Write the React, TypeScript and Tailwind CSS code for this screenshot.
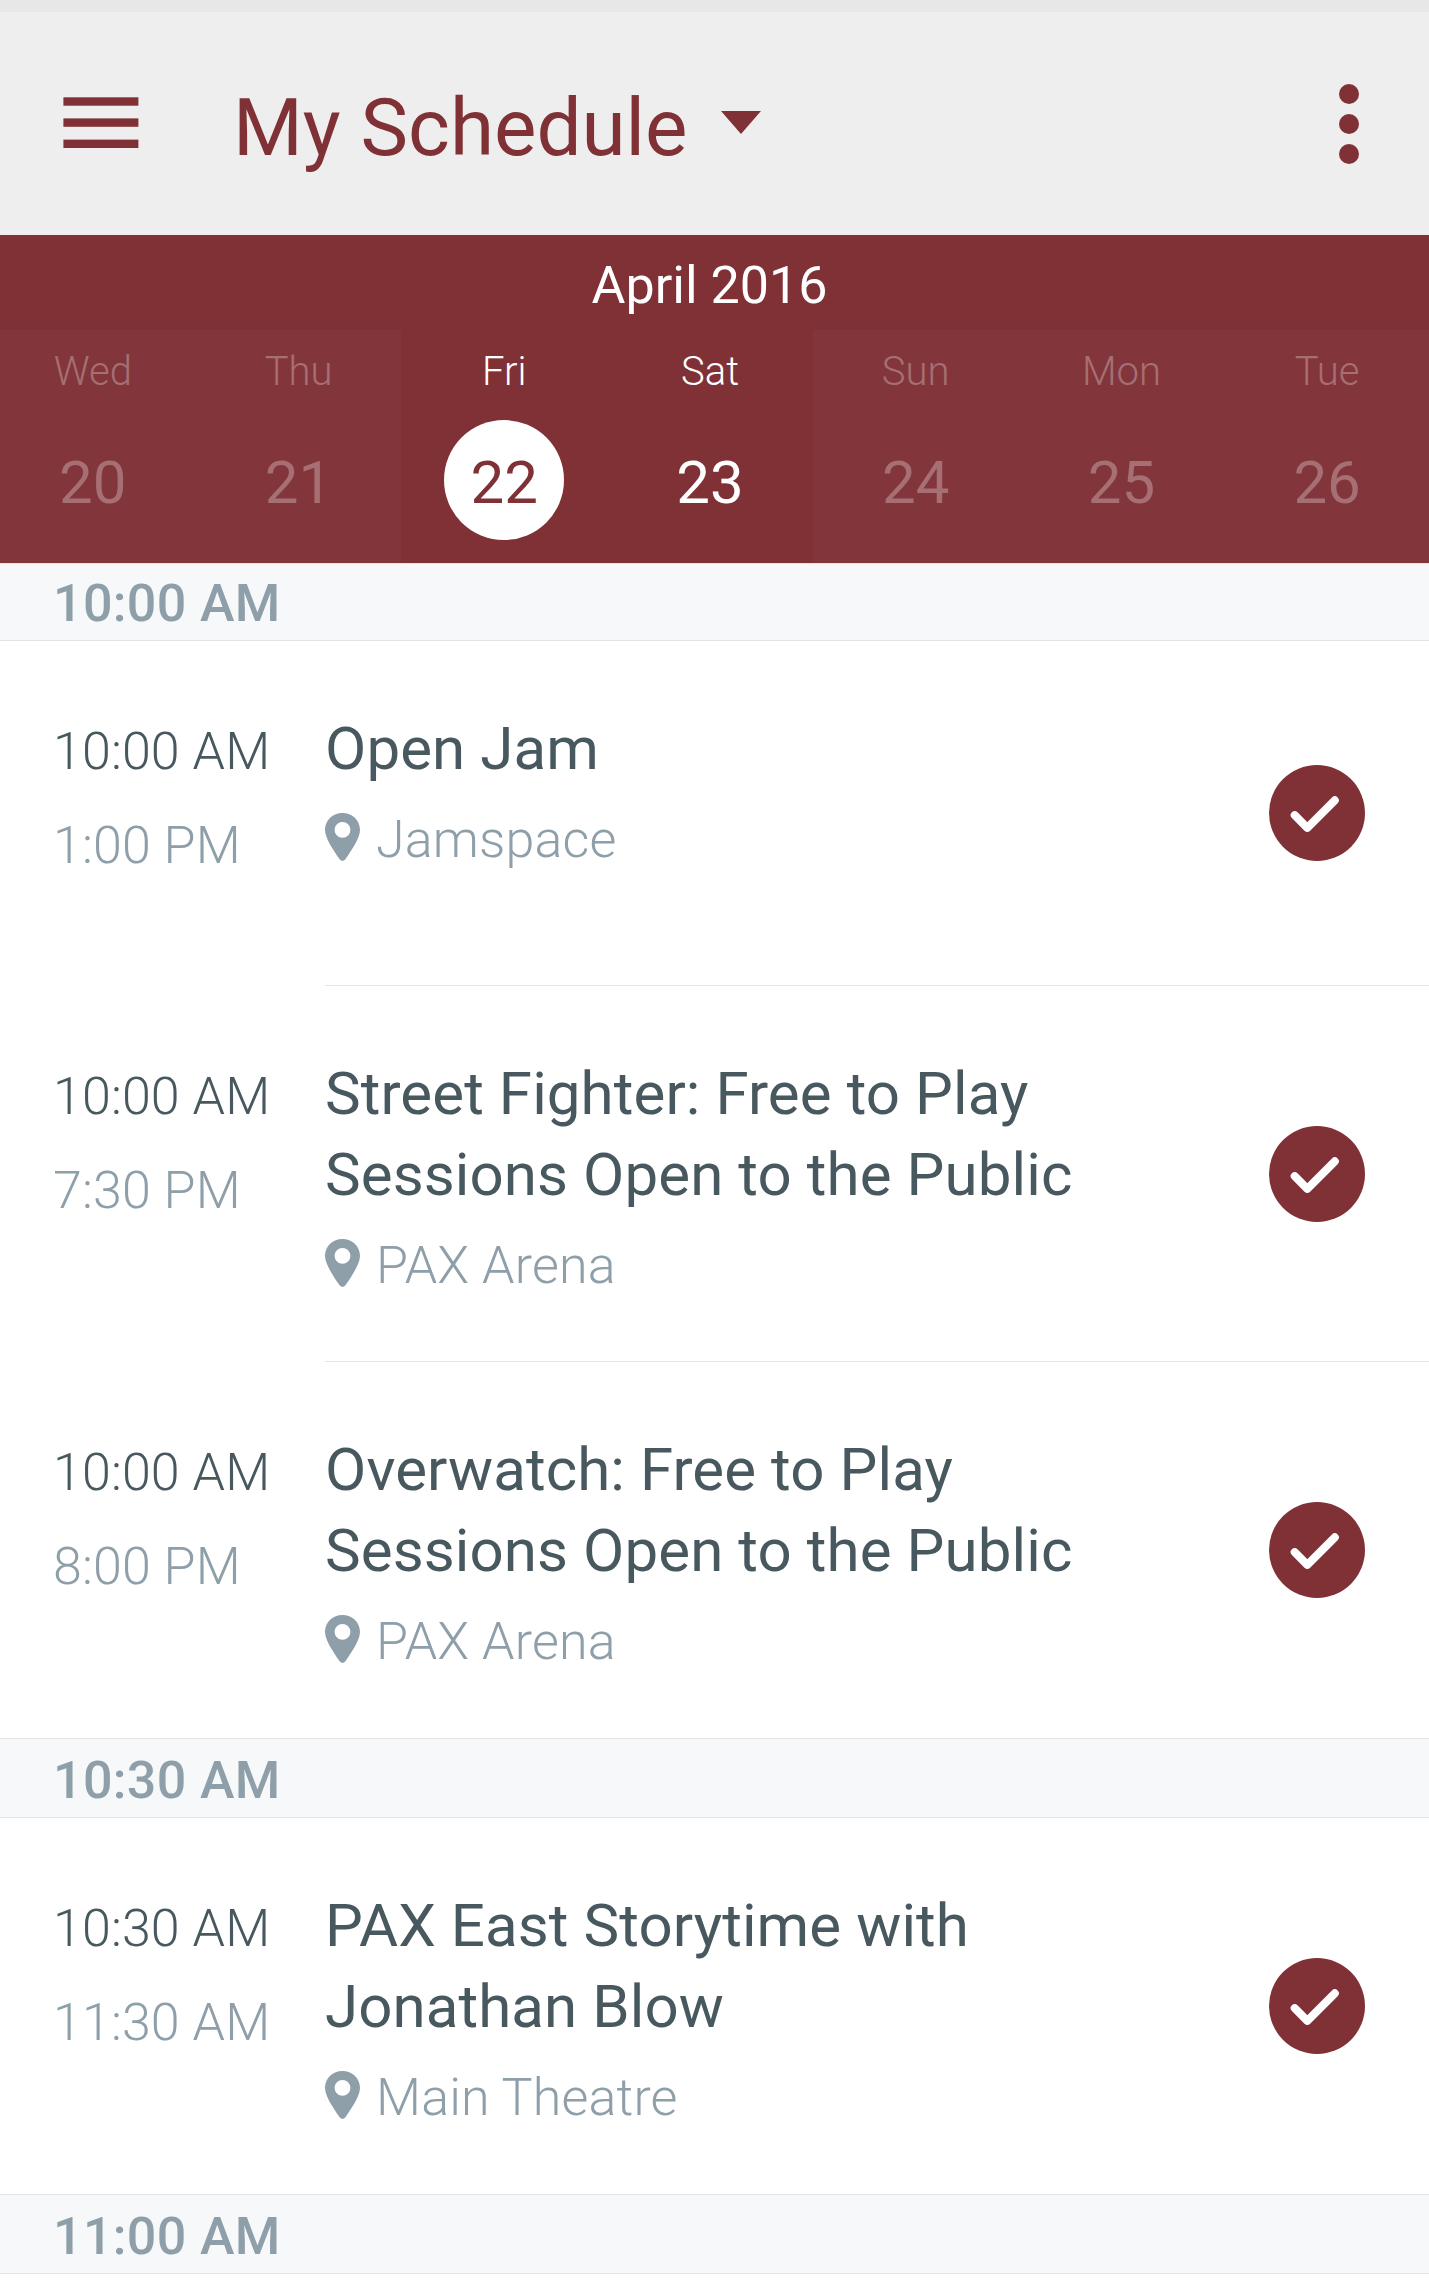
import React from "react";

interface Day {
  name: string;
  date: number;
  state: "disabled" | "selected" | "active";
}

interface Session {
  start: string;
  end: string;
  title: string[];
  location: string;
}

interface Slot {
  time: string;
  sessions: Session[];
}

const days: Day[] = [
  { name: "Wed", date: 20, state: "disabled" },
  { name: "Thu", date: 21, state: "disabled" },
  { name: "Fri", date: 22, state: "selected" },
  { name: "Sat", date: 23, state: "active" },
  { name: "Sun", date: 24, state: "disabled" },
  { name: "Mon", date: 25, state: "disabled" },
  { name: "Tue", date: 26, state: "disabled" },
];

const slots: Slot[] = [
  {
    time: "10:00 AM",
    sessions: [
      { start: "10:00 AM", end: "1:00 PM", title: ["Open Jam"], location: "Jamspace" },
      {
        start: "10:00 AM",
        end: "7:30 PM",
        title: ["Street Fighter: Free to Play", "Sessions Open to the Public"],
        location: "PAX Arena",
      },
      {
        start: "10:00 AM",
        end: "8:00 PM",
        title: ["Overwatch: Free to Play", "Sessions Open to the Public"],
        location: "PAX Arena",
      },
    ],
  },
  {
    time: "10:30 AM",
    sessions: [
      {
        start: "10:30 AM",
        end: "11:30 AM",
        title: ["PAX East Storytime with", "Jonathan Blow"],
        location: "Main Theatre",
      },
    ],
  },
  { time: "11:00 AM", sessions: [] },
];

const dayStyles = {
  disabled: { cell: "bg-[#82363b] text-[#a66f73]", date: "" },
  selected: { cell: "text-white", date: "bg-white text-[#803136]" },
  active: { cell: "text-white", date: "" },
};

const PinIcon: React.FC = () => (
  <svg className="mb-1.5 h-12 w-[35px] shrink-0" viewBox="0 0 35 48" fill="currentColor" aria-hidden="true">
    <path
      fillRule="evenodd"
      d="M17.5 0C7.8 0 0 7.4 0 16.8C0 24 6 34 14.8 46.6Q17.5 49.4 20.2 46.6C29 34 35 24 35 16.8C35 7.4 27.2 0 17.5 0ZM17.5 9a7.900 7.900 0 1 1 0 15.800a7.900 7.900 0 1 1 0-15.800Z"
    />
  </svg>
);

const CheckBadge: React.FC = () => (
  <svg className="size-24 shrink-0" viewBox="0 0 96 96" fill="none" aria-hidden="true">
    <circle cx="48" cy="48" r="48" fill="#803136" />
    <path d="M25.7 50.2L38.3 62.8L65.8 35.3" stroke="white" strokeWidth="8" strokeLinecap="round" strokeLinejoin="round" />
  </svg>
);

const Header: React.FC = () => (
  <header className="flex h-[235px] items-center border-t-[12px] border-[#e7e7e7] bg-[#eeeeee] text-[#803136]">
    <svg className="mb-[2px] ml-[63px] h-[51px] w-[76px]" viewBox="0 0 76 51" fill="currentColor" aria-hidden="true">
      <rect x="0.4" y="0.3" width="75" height="8.4" />
      <rect x="0.4" y="21.4" width="75" height="8.4" />
      <rect x="0.4" y="42.6" width="75" height="8.4" />
    </svg>
    <h1 className="ml-[94px] pt-2 text-[80px] leading-[100px]">My Schedule</h1>
    <svg className="mb-[3px] ml-[33px] h-[23px] w-10" viewBox="0 0 40 23" fill="currentColor" aria-hidden="true">
      <path d="M0 0H40L20 23Z" />
    </svg>
    <div className="mr-[70px] ml-auto flex flex-col gap-2.5">
      <span className="size-5 rounded-full bg-[#803136]" />
      <span className="size-5 rounded-full bg-[#803136]" />
      <span className="size-5 rounded-full bg-[#803136]" />
    </div>
  </header>
);

const Calendar: React.FC = () => (
  <div className="h-[328px] overflow-hidden bg-[#803136]">
    {/* the week strip bleeds slightly past both screen edges */}
    <div className="-ml-2.5 w-[1440px]">
      <h2 className="h-[95px] pt-1.5 pr-px text-center text-[52px] leading-[90px] text-white">April 2016</h2>
      <div className="grid grid-cols-7">
        {days.map((day) => (
          <div key={day.date} className={`flex h-[233px] flex-col items-center pt-3 ${dayStyles[day.state].cell}`}>
            <span className="text-[40px] leading-[60px] font-light">{day.name}</span>
            <span className={`mt-[18px] size-[120px] rounded-full pt-[5px] text-center text-[60px] leading-[115px] ${dayStyles[day.state].date}`}>
              {day.date}
            </span>
          </div>
        ))}
      </div>
    </div>
  </div>
);

const SessionRow: React.FC<{ session: Session }> = ({ session }) => (
  <article className="group flex">
    <div className="w-[325px] shrink-0 pt-16 pl-[53px] text-[52px] leading-[94px] font-light tracking-[0.1px]">
      <p className="text-[#48585f]">{session.start}</p>
      <p className="text-[#8e9faa]">{session.end}</p>
    </div>
    <div className="flex min-h-[345px] flex-1 items-center justify-between border-b border-[#e1e3e4] pr-16 group-last:border-b-0">
      <div className="self-start pt-[67px] pb-[63px] group-last:pb-16">
        <h3 className="text-[60px] leading-[81px] tracking-[0.1px] text-[#48585f]">
          {session.title.map((line) => (
            <span key={line} className="block">{line}</span>
          ))}
        </h3>
        <div className="mt-[19px] flex items-center gap-4 text-[#8e9faa]">
          <PinIcon />
          <span className="text-[52px] leading-[64px] font-light tracking-[0.15px]">{session.location}</span>
        </div>
      </div>
      <CheckBadge />
    </div>
  </article>
);

export default function App() {
  return (
    <main className="h-[2293px] w-[1429px] overflow-hidden bg-white font-['Roboto',sans-serif]">
      <Header />
      <Calendar />
      {slots.map((slot) => (
        <section key={slot.time} className="group/slot">
          <h2 className="h-20 border-y border-[#e1e3e4] bg-[#f6f8fa] pt-[5px] pl-[53px] text-[52px] leading-[74px] font-medium tracking-[0.35px] text-[#8e9faa] group-first-of-type/slot:h-[78px] group-first-of-type/slot:pt-[3px]">
            {slot.time}
          </h2>
          <div>
            {slot.sessions.map((session) => (
              <SessionRow key={session.title[0]} session={session} />
            ))}
          </div>
        </section>
      ))}
    </main>
  );
}
